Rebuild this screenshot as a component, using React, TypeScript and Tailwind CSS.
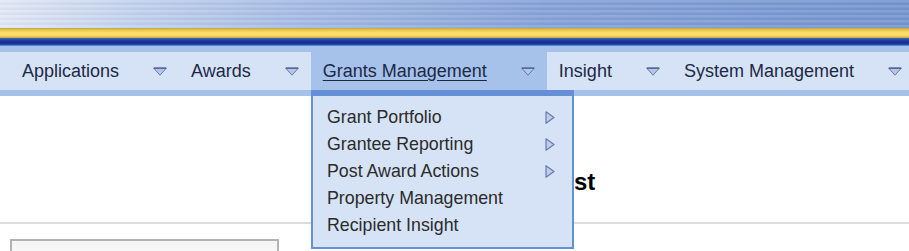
import React from 'react';

const navItems = [
    { label: 'Applications', first: true },
    { label: 'Awards' },
    { label: 'Grants Management', active: true },
    { label: 'Insight' },
    { label: 'System Management' },
];

const menuItems = [
    { label: 'Grant Portfolio', sub: true },
    { label: 'Grantee Reporting', sub: true },
    { label: 'Post Award Actions', sub: true },
    { label: 'Property Management' },
    { label: 'Recipient Insight' },
];

const DownArrow = () => (
    <svg width="14" height="9" viewBox="0 0 14 9" className="ml-[34px] shrink-0">
        <path d="M0.5 1 L13.5 1 L7 8.2 Z" fill="#b5c5e5" stroke="#6a7dae" strokeWidth="1" strokeLinejoin="round" />
        <path d="M1 1.2 L13 1.2" stroke="#56699b" strokeWidth="1.5" />
    </svg>
);

const RightArrow = () => (
    <svg width="10" height="13" viewBox="0 0 10 13" className="shrink-0">
        <path d="M1 0.8 L9 6.5 L1 12.2 Z" fill="#c0cdea" stroke="#6679ad" strokeWidth="1.2" strokeLinejoin="round" />
    </svg>
);

const App = () => {
    return (
        <div className="w-[909px] h-[251px] overflow-hidden bg-white font-['Liberation_Sans',Arial,sans-serif]">
            {/* Banner */}
            <div className="h-[28px] bg-[repeating-linear-gradient(180deg,rgba(255,255,255,0.10)_0px,rgba(255,255,255,0.10)_2px,rgba(0,0,0,0.03)_3px,rgba(0,0,0,0.03)_5px),linear-gradient(90deg,#e2e9f6_0%,#c2d2ee_15%,#a3bae4_35%,#87a3d9_60%,#7596d0_100%)]" />
            <div className="h-[10px] bg-[linear-gradient(180deg,#b9a653_0%,#e9c745_20%,#ffdf6c_50%,#fbd95f_75%,#b7a660_100%)]" />
            <div className="h-[7px] bg-[linear-gradient(180deg,#4a68ad_0%,#1d3d9d_35%,#132f8c_70%,#2d52b0_100%)]" />
            <div className="h-px bg-[#5a82d2]" />

            {/* Nav bar */}
            <div className="relative bg-[#a6c1ea] pt-[6px] pb-[6px]">
                <div className="flex h-[38px] bg-[#d6e3f6]">
                    {navItems.map((item) => (
                        <div
                            key={item.label}
                            className={`flex items-center shrink-0 pr-[12px] ${item.first ? 'pl-[22px]' : 'pl-[12px]'} ${item.active ? 'bg-[#a6c1ea]' : ''}`}
                        >
                            <span className={`text-[18px] text-[#1c2946] leading-none ${item.active ? 'underline underline-offset-[3px]' : ''}`}>
                                {item.label}
                            </span>
                            <DownArrow />
                        </div>
                    ))}
                </div>

                {/* Dropdown */}
                <div className="absolute left-[311px] top-[44px] z-10 w-[263px] bg-[#d6e3f6] border-x-2 border-b-2 border-t-[6px] border-[#6590d8] pt-[8px] pb-[8px] pl-[14px] pr-[17px]">
                    {menuItems.map((m) => (
                        <div key={m.label} className="flex items-center justify-between h-[27px]">
                            <span className="text-[17.8px] text-[#2b2b2b]">{m.label}</span>
                            {m.sub && <RightArrow />}
                        </div>
                    ))}
                </div>
            </div>

            {/* Page content */}
            <div className="pt-[72px]">
                <h1 className="pl-[473px] text-[24px] leading-[28px] font-bold text-black">Award List</h1>
                <div className="mt-[26px] h-[2px] bg-[#dcdcdc]" />
                <div className="ml-[10px] mt-[15px] w-[269px] h-[40px] border-2 border-[#b4b4b4] bg-[linear-gradient(180deg,#f4f4f4,#ffffff)]" />
            </div>
        </div>
    );
};

export default App;
